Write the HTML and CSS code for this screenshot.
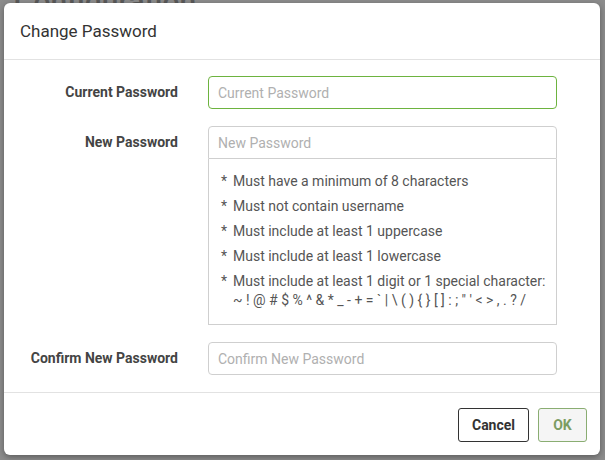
FILE: index.html
```html
<!DOCTYPE html>
<html>
<head>
<meta charset="utf-8">
<link rel="stylesheet" href="styles.css">
</head>
<body>
<div class="page">
  <div class="page-title">Configuration</div>
</div>
<div class="modal">
  <div class="modal-header">Change Password</div>
  <div class="modal-body">
    <div class="row">
      <label class="label">Current Password</label>
      <div class="field"><input class="input focused" type="password" placeholder="Current Password"></div>
    </div>
    <div class="row">
      <label class="label">New Password</label>
      <div class="field">
        <input class="input attached" type="password" placeholder="New Password">
        <ul class="hints">
          <li><span class="star">*</span><span>Must have a minimum of 8 characters</span></li>
          <li><span class="star">*</span><span>Must not contain username</span></li>
          <li><span class="star">*</span><span>Must include at least 1 uppercase</span></li>
          <li><span class="star">*</span><span>Must include at least 1 lowercase</span></li>
          <li><span class="star">*</span><span>Must include at least 1 digit or 1 special character:<br>~ ! @ # $ % ^ &amp; * _ - + = ` | \ ( ) { } [ ] : ; " ' &lt; &gt; , . ? /</span></li>
        </ul>
      </div>
    </div>
    <div class="row">
      <label class="label">Confirm New Password</label>
      <div class="field"><input class="input" type="password" placeholder="Confirm New Password"></div>
    </div>
  </div>
  <div class="modal-footer">
    <button class="btn btn-cancel">Cancel</button>
    <button class="btn btn-ok">OK</button>
  </div>
</div>
</body>
</html>
```
FILE: styles.css
```css
html, body {
  margin: 0;
  padding: 0;
  width: 605px;
  height: 460px;
  overflow: hidden;
  background: #8c8c8c;
  font-family: Roboto, "Liberation Sans", sans-serif;
}
.page {
  padding: 0 0 0 14px;
}
.page-title {
  font-size: 30px;
  color: #5a5a5a;
  margin-top: -16px;
  font-weight: 500;
}
.modal {
  position: absolute;
  left: 4px;
  top: 3px;
  width: 596px;
  height: 452px;
  background: #fff;
  border-radius: 6px;
  box-shadow: 0 2px 6px rgba(0,0,0,0.35);
  display: flex;
  flex-direction: column;
  overflow: hidden;
}
.modal-header {
  height: 56px;
  border-bottom: 1px solid #e2e2e2;
  display: flex;
  align-items: center;
  padding-left: 16px;
  font-size: 17px;
  color: #333;
}
.modal-body {
  padding: 16px 0 17px 16px;
  border-bottom: 1px solid #e2e2e2;
  display: flex;
  flex-direction: column;
  gap: 17px;
}
.row {
  display: flex;
  align-items: flex-start;
}
.label {
  width: 158px;
  text-align: right;
  font-size: 14px;
  font-weight: 700;
  color: #444;
  line-height: 33px;
  margin-right: 30px;
}
.field {
  width: 349px;
}
.input {
  display: block;
  box-sizing: border-box;
  width: 349px;
  height: 33px;
  border: 1px solid #cfcfcf;
  border-radius: 4px;
  padding: 0 9px;
  font-family: Roboto, "Liberation Sans", sans-serif;
  font-size: 14px;
  outline: none;
  background: #fff;
}
.input::placeholder {
  color: #b0b0b0;
}
.input.focused {
  border-color: #6db33f;
}
.input.attached {
  border-radius: 4px 4px 0 0;
}
.hints {
  list-style: none;
  margin: 0;
  box-sizing: border-box;
  width: 349px;
  height: 166px;
  border: 1px solid #cfcfcf;
  border-top: none;
  padding: 13px 8px 0 12px;
  font-size: 14px;
  line-height: 19px;
  color: #555;
}
.hints li {
  display: flex;
  margin-bottom: 6px;
}
.star {
  width: 12px;
  flex: none;
}
.modal-footer {
  flex: 1;
  display: flex;
  justify-content: flex-end;
  align-items: flex-start;
  padding: 15px 13px 0 0;
  gap: 9px;
}
.btn {
  height: 34px;
  border-radius: 3px;
  font-family: Roboto, "Liberation Sans", sans-serif;
  font-size: 14px;
  font-weight: 700;
  background: #fff;
  padding: 0;
}
.btn-cancel {
  width: 71px;
  border: 1px solid #333;
  color: #333;
}
.btn-ok {
  width: 49px;
  border: 1px solid #8aad72;
  color: #7c9d63;
  background: #f5f5f5;
}
```
